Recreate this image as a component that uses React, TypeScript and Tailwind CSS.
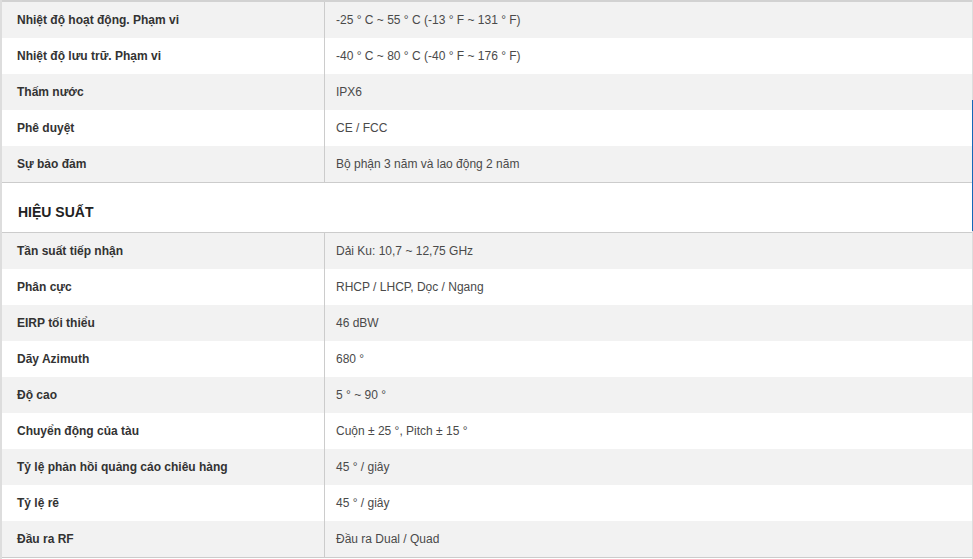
import React from "react";

const envRows = [
  ["Nhiệt độ hoạt động. Phạm vi", "-25 ° C ~ 55 ° C (-13 ° F ~ 131 ° F)"],
  ["Nhiệt độ lưu trữ. Phạm vi", "-40 ° C ~ 80 ° C (-40 ° F ~ 176 ° F)"],
  ["Thấm nước", "IPX6"],
  ["Phê duyệt", "CE / FCC"],
  ["Sự bảo đảm", "Bộ phận 3 năm và lao động 2 năm"],
];

const perfRows = [
  ["Tần suất tiếp nhận", "Dải Ku: 10,7 ~ 12,75 GHz"],
  ["Phân cực", "RHCP / LHCP, Dọc / Ngang"],
  ["EIRP tối thiểu", "46 dBW"],
  ["Dãy Azimuth", "680 °"],
  ["Độ cao", "5 ° ~ 90 °"],
  ["Chuyển động của tàu", "Cuộn ± 25 °, Pitch ± 15 °"],
  ["Tỷ lệ phản hồi quảng cáo chiêu hàng", "45 ° / giây"],
  ["Tỷ lệ rẽ", "45 ° / giây"],
  ["Đầu ra RF", "Đầu ra Dual / Quad"],
];

function SpecRow({ label, value, shaded }: { label: string; value: string; shaded: boolean }) {
  return (
    <div className={`flex h-9 items-center ${shaded ? "bg-[#f2f2f2]" : "bg-white"}`}>
      <div className="w-[323px] h-full flex items-center pl-[15px] text-[12px] font-bold text-[#333] border-r border-[#cccccc]">
        {label}
      </div>
      <div className="flex-1 h-full flex items-center pl-[11px] text-[12px] text-[#4a4a4a]">{value}</div>
    </div>
  );
}

export default function App() {
  return (
    <div className="w-[973px] h-[559px] bg-white flex font-['Liberation_Sans',Arial,sans-serif] overflow-hidden">
      {/* left edge */}
      <div className="w-[2px] bg-[#dddddd]" />

      <div className="flex-1 flex flex-col">
        <div className="border-t-2 border-[#d2d2d2]">
          {envRows.map(([l, v], i) => (
            <SpecRow key={l} label={l} value={v} shaded={i % 2 === 0} />
          ))}
        </div>

        {/* section header */}
        <div className="h-[51px] border-y border-[#cccccc] flex items-center pl-[16px] pt-[10px] bg-white">
          <h3 className="text-[14px] font-bold text-[#222] uppercase">Hiệu suất</h3>
        </div>

        <div className="border-b border-[#cccccc]">
          {perfRows.map(([l, v], i) => (
            <SpecRow key={l} label={l} value={v} shaded={i % 2 === 0} />
          ))}
        </div>
      </div>

      {/* right edge with highlight */}
      <div className="w-px flex flex-col">
        <div className="h-[100px] bg-[#dddddd]" />
        <div className="h-[131px] bg-[#1469b8]" />
        <div className="flex-1 bg-[#dddddd]" />
      </div>
    </div>
  );
}
